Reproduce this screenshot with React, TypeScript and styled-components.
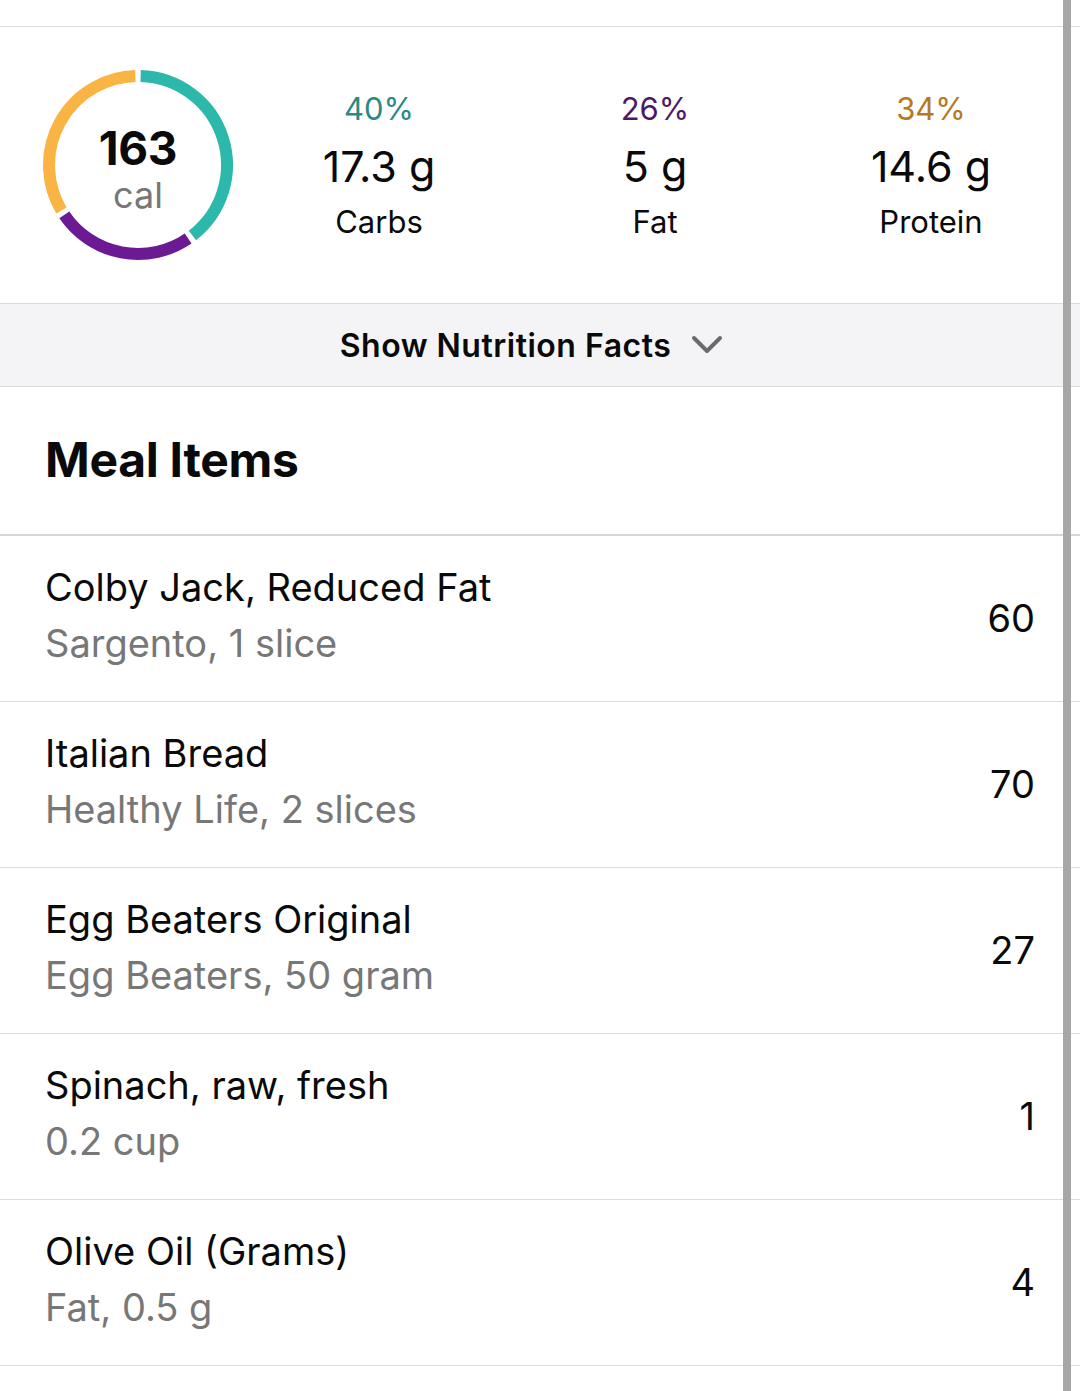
import React from "react";
import styled, { createGlobalStyle } from "styled-components";

const Global = createGlobalStyle`
  html, body { margin: 0; padding: 0; background: #fff; }
  body { font-family: Inter, "Noto Sans", "Liberation Sans", sans-serif; color: #0a0a0a; }
  * { box-sizing: border-box; }
`;

const Page = styled.div`
  position: relative;
  width: 1080px;
  min-height: 1391px;
  background: #fff;
  overflow: hidden;
`;

const Scrollbar = styled.div`
  position: absolute;
  top: 0;
  bottom: 0;
  left: 1063px;
  width: 8px;
  background: #a7a7a7;
`;

const TopStrip = styled.div`
  height: 27px;
  border-bottom: 1px solid #dedede;
`;

const Summary = styled.section`
  display: flex;
  align-items: center;
  height: 276px;
`;

const RingBox = styled.div`
  position: relative;
  width: 241px;
  height: 192px;
  padding-left: 42px;
  flex-shrink: 0;
`;

const RingLabel = styled.div`
  position: absolute;
  left: 42px;
  top: 0;
  width: 192px;
  height: 192px;
  display: flex;
  flex-direction: column;
  align-items: center;
  justify-content: center;
  padding-top: 10px;
`;

const Kcal = styled.div`
  font-size: 46px;
  font-weight: 700;
  line-height: 50px;
  color: #0a0a0a;
  letter-spacing: -0.3px;
`;

const KcalUnit = styled.div`
  font-size: 36px;
  line-height: 44px;
  color: #777;
`;

const Macros = styled.div`
  display: grid;
  grid-template-columns: 276px 276px 276px;
`;

const Macro = styled.div`
  display: flex;
  flex-direction: column;
  align-items: center;
`;

const Pct = styled.div<{ $color: string }>`
  font-size: 31px;
  line-height: 42px;
  color: ${(p) => p.$color};
`;

const Grams = styled.div`
  font-size: 43px;
  line-height: 72px;
  color: #0a0a0a;
`;

const MacroName = styled.div`
  font-size: 31px;
  line-height: 40px;
  color: #0a0a0a;
`;

const FactsBar = styled.button`
  display: flex;
  align-items: center;
  justify-content: center;
  gap: 20px;
  width: 100%;
  height: 84px;
  padding: 0 17px 0 0;
  margin: 0;
  background: #f4f4f6;
  border: none;
  border-top: 1px solid #dadada;
  border-bottom: 1px solid #dadada;
  font-family: inherit;
  font-size: 32px;
  font-weight: 600;
  letter-spacing: 0.5px;
  color: #0a0a0a;
`;

const SectionHeader = styled.h2`
  margin: 0;
  height: 149px;
  display: flex;
  align-items: center;
  padding: 0 45px 2px;
  font-size: 48px;
  font-weight: 700;
  letter-spacing: -0.3px;
  border-bottom: 2px solid #d6d6d6;
`;

const Row = styled.div`
  display: flex;
  align-items: center;
  justify-content: space-between;
  height: 166px;
  padding: 0 45px 2px 45px;
  border-bottom: 1px solid #dcdcdc;
`;

const RowText = styled.div`
  display: flex;
  flex-direction: column;
  padding-bottom: 6px;
`;

const ItemName = styled.div`
  font-size: 38px;
  line-height: 56px;
  color: #0a0a0a;
`;

const ItemDetail = styled.div`
  font-size: 38px;
  line-height: 56px;
  color: #777;
`;

const Cal = styled.div`
  font-size: 38px;
  color: #0a0a0a;
`;

const polar = (cx: number, cy: number, r: number, deg: number) => {
  const a = ((deg - 90) * Math.PI) / 180;
  return [cx + r * Math.cos(a), cy + r * Math.sin(a)];
};

const arc = (start: number, end: number) => {
  const [x1, y1] = polar(96, 96, 89, start);
  const [x2, y2] = polar(96, 96, 89, end);
  const large = end - start > 180 ? 1 : 0;
  return `M ${x1} ${y1} A 89 89 0 ${large} 1 ${x2} ${y2}`;
};

const Ring = () => {
  const segs = [
    { from: 0, to: 144, color: "#2cb8ab" },
    { from: 144, to: 237.6, color: "#6c1a93" },
    { from: 237.6, to: 360, color: "#f9b444" },
  ];
  const g = 1.7;
  return (
    <svg width="192" height="192" viewBox="0 0 192 192">
      {segs.map((s) => (
        <path
          key={s.color}
          d={arc(s.from + g, s.to - g)}
          fill="none"
          stroke={s.color}
          strokeWidth={12}
          strokeLinecap="butt"
        />
      ))}
    </svg>
  );
};

const Chevron = () => (
  <svg width="32" height="22" viewBox="0 0 32 22">
    <path d="M3 4 L16 17 L29 4" fill="none" stroke="#6b6b6b" strokeWidth="4" strokeLinecap="round" strokeLinejoin="round" />
  </svg>
);

const macros = [
  { pct: "40%", g: "17.3 g", name: "Carbs", color: "#2a8a82" },
  { pct: "26%", g: "5 g", name: "Fat", color: "#4e1866" },
  { pct: "34%", g: "14.6 g", name: "Protein", color: "#b7781f" },
];

const items = [
  { name: "Colby Jack, Reduced Fat", detail: "Sargento, 1 slice", cal: "60" },
  { name: "Italian Bread", detail: "Healthy Life, 2 slices", cal: "70" },
  { name: "Egg Beaters Original", detail: "Egg Beaters, 50 gram", cal: "27" },
  { name: "Spinach, raw, fresh", detail: "0.2 cup", cal: "1" },
  { name: "Olive Oil (Grams)", detail: "Fat, 0.5 g", cal: "4" },
];

export default function App() {
  return (
    <Page>
      <Global />
      <TopStrip />
      <Summary>
        <RingBox>
          <Ring />
          <RingLabel>
            <Kcal>163</Kcal>
            <KcalUnit>cal</KcalUnit>
          </RingLabel>
        </RingBox>
        <Macros>
          {macros.map((m) => (
            <Macro key={m.name}>
              <Pct $color={m.color}>{m.pct}</Pct>
              <Grams>{m.g}</Grams>
              <MacroName>{m.name}</MacroName>
            </Macro>
          ))}
        </Macros>
      </Summary>
      <FactsBar>
        <span>Show Nutrition Facts</span>
        <Chevron />
      </FactsBar>
      <SectionHeader>Meal Items</SectionHeader>
      {items.map((it) => (
        <Row key={it.name}>
          <RowText>
            <ItemName>{it.name}</ItemName>
            <ItemDetail>{it.detail}</ItemDetail>
          </RowText>
          <Cal>{it.cal}</Cal>
        </Row>
      ))}
      <Scrollbar />
    </Page>
  );
}
